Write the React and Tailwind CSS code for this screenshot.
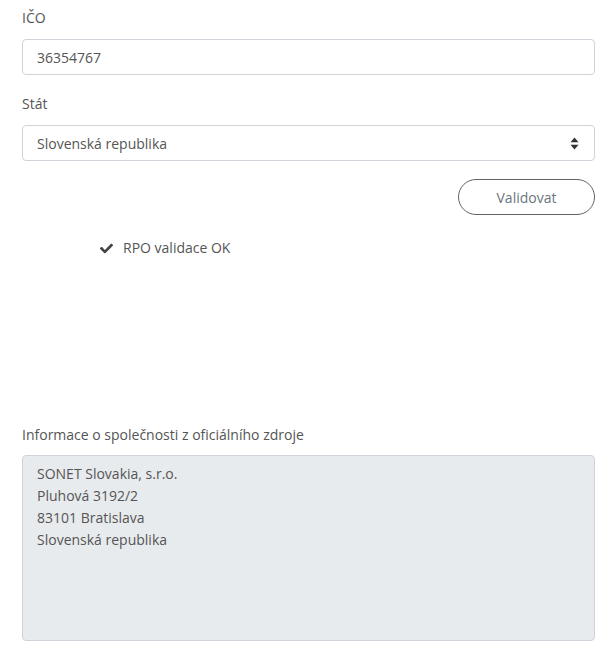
import React from 'react';
import { FaCheck } from 'react-icons/fa';

const font = { fontFamily: '"Open Sans", "Noto Sans", sans-serif' };

function SortIcon() {
  return (
    <svg width="9" height="13" viewBox="0 0 9 13" className="text-[#333]">
      <path d="M4.5 0.5 L8.5 5.2 L0.5 5.2 Z" fill="currentColor" />
      <path d="M4.5 12.5 L8.5 7.8 L0.5 7.8 Z" fill="currentColor" />
    </svg>
  );
}

export default function App() {
  return (
    <div className="w-[616px] h-[666px] bg-white pl-[22px] pr-[21px] pt-2 text-[14px] text-[#555]" style={font}>
      <label className="block leading-5 mb-[11px]">IČO</label>
      <input
        defaultValue="36354767"
        className="block w-full h-9 px-[14px] border border-[#ced4da] rounded-[4px] text-[14px] text-[#555] outline-none"
      />

      <label className="block leading-5 mt-[19px] mb-[11px]">Stát</label>
      <div className="relative">
        <div className="flex items-center justify-between w-full h-9 pl-[14px] pr-[15px] border border-[#ced4da] rounded-[4px]">
          <span>Slovenská republika</span>
          <SortIcon />
        </div>
      </div>

      <div className="flex justify-end mt-[18px]">
        <button className="w-[137px] h-9 rounded-full border border-[#5f6368] text-[#6c757d] text-[14px]">
          Validovat
        </button>
      </div>

      <div className="flex items-center mt-[23px] pl-[78px] leading-5 text-[#555]">
        <FaCheck className="w-[13px] h-[13px] text-[#444] mr-[10px]" />
        <span>RPO validace OK</span>
      </div>

      <label className="block leading-5 mt-[167px] mb-[10px]">Informace o společnosti z oficiálního zdroje</label>
      <div className="w-full h-[186px] bg-[#e8ebee] border border-[#ced4da] rounded-[4px] px-[14px] pt-[7px] leading-[22px] text-[#555]">
        <div>SONET Slovakia, s.r.o.</div>
        <div>Pluhová 3192/2</div>
        <div>83101 Bratislava</div>
        <div>Slovenská republika</div>
      </div>
    </div>
  );
}
